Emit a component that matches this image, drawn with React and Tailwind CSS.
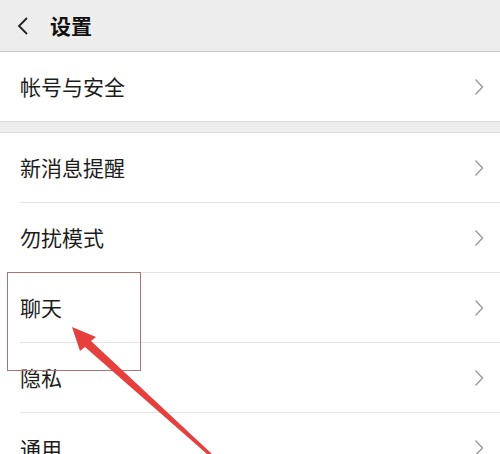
import React from "react";

const font = { fontFamily: '"Noto Sans CJK SC", "Noto Sans", sans-serif' };

function Chevron() {
  return (
    <svg width="10" height="18" viewBox="0 0 10 18" className="shrink-0">
      <path d="M1.5 1.5 L8.5 9 L1.5 16.5" fill="none" stroke="#9b9b9b" strokeWidth="1.4" />
    </svg>
  );
}

function Row({ label, last }) {
  return (
    <div className="pl-[20px] bg-white">
      <div
        className={`h-[70px] flex items-center justify-between pr-[16px] ${last ? "" : "border-b border-[#e3e3e3]"}`}
      >
        <span className="text-[21px] text-[#1c1c1c] leading-none">{label}</span>
        <Chevron />
      </div>
    </div>
  );
}

export default function App() {
  return (
    <div className="relative w-[500px] h-[454px] overflow-hidden bg-white" style={font}>
      <div className="h-[52px] bg-[#ededed] border-b border-[#c8c8c8] flex items-center pl-[17px]">
        <svg width="12" height="20" viewBox="0 0 12 20">
          <path d="M10 2 L2 10 L10 18" fill="none" stroke="#222" strokeWidth="1.8" />
        </svg>
        <span className="ml-[21px] text-[21px] font-bold text-[#111] leading-none">设置</span>
      </div>
      <div className="bg-white">
        <div className="h-[69px] flex items-center justify-between pl-[20px] pr-[16px]">
          <span className="text-[21px] text-[#1c1c1c] leading-none">帐号与安全</span>
          <Chevron />
        </div>
      </div>
      <div className="h-[12px] bg-[#ededed] border-t border-b border-[#dcdcdc]" />
      <Row label="新消息提醒" />
      <Row label="勿扰模式" />
      <Row label="聊天" />
      <Row label="隐私" />
      <Row label="通用" last />

      <div className="absolute left-[7px] top-[272px] w-[134px] h-[99px] border border-[#a87474]" />
      <svg className="absolute left-0 top-0" width="500" height="454" viewBox="0 0 500 454">
        <polygon
          points="72,327 96,337 91,341 212,454 207,454 85,347 80,351"
          fill="#e5403e"
        />
      </svg>
    </div>
  );
}
